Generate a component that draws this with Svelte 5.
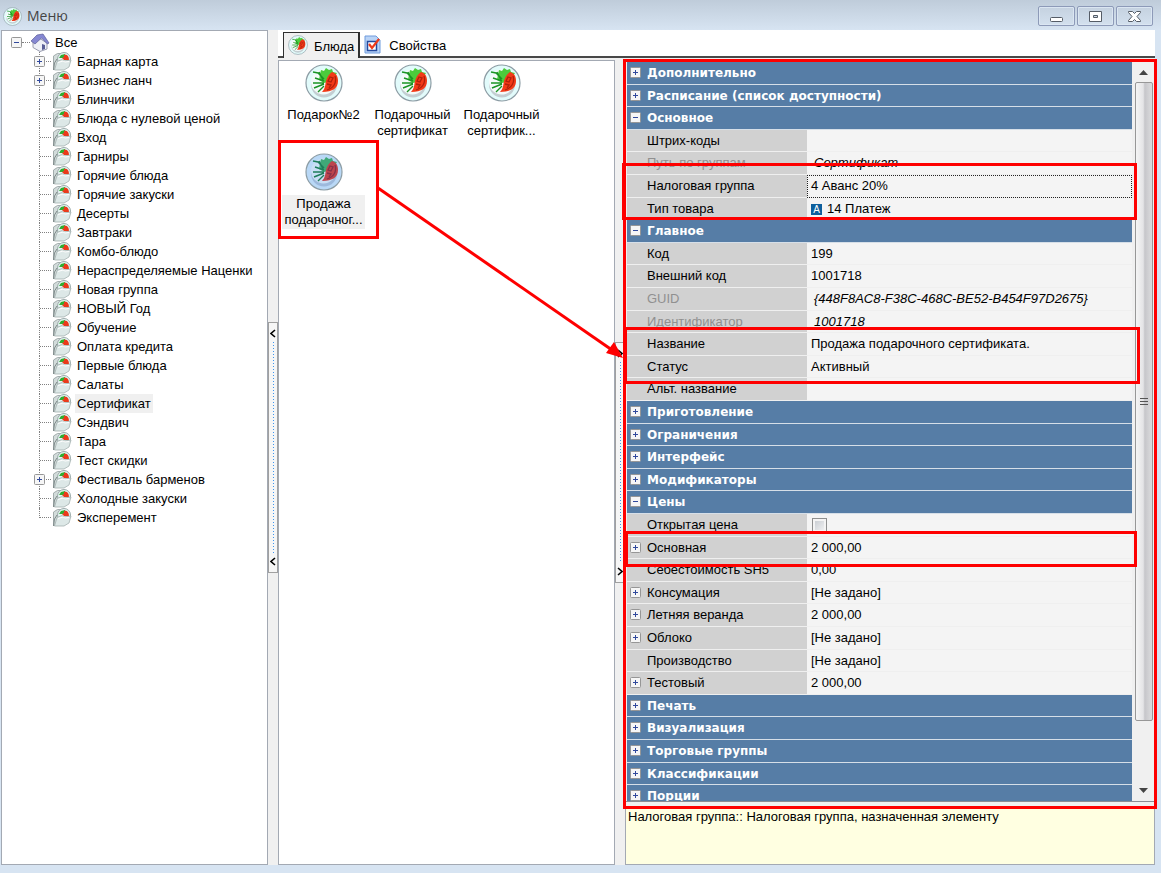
<script>
	const folders = [
		{ name: 'Барная карта', open: true },
		{ name: 'Бизнес ланч', open: true },
		{ name: 'Блинчики' },
		{ name: 'Блюда с нулевой ценой' },
		{ name: 'Вход' },
		{ name: 'Гарниры' },
		{ name: 'Горячие блюда' },
		{ name: 'Горячие закуски' },
		{ name: 'Десерты' },
		{ name: 'Завтраки' },
		{ name: 'Комбо-блюдо' },
		{ name: 'Нераспределяемые Наценки' },
		{ name: 'Новая группа' },
		{ name: 'НОВЫЙ Год' },
		{ name: 'Обучение' },
		{ name: 'Оплата кредита' },
		{ name: 'Первые блюда' },
		{ name: 'Салаты' },
		{ name: 'Сертификат' },
		{ name: 'Сэндвич' },
		{ name: 'Тара' },
		{ name: 'Тест скидки' },
		{ name: 'Фестиваль барменов', open: true },
		{ name: 'Холодные закуски' },
		{ name: 'Эксперемент' }
	];

	const dishes = [
		['Подарок№2'],
		['Подарочный', 'сертификат'],
		['Подарочный', 'сертифик...'],
		['Продажа', 'подарочног...']
	];

	const rows = [
		{ group: 'Дополнительно' },
		{ group: 'Расписание (список доступности)' },
		{ group: 'Основное', opened: true },
		{ name: 'Штрих-коды', value: '' },
		{ name: 'Путь по группам', value: 'Сертификат', readonly: true },
		{ name: 'Налоговая группа', value: '4 Аванс 20%', focused: true },
		{ name: 'Тип товара', value: '14 Платеж', badge: 'A' },
		{ group: 'Главное', opened: true },
		{ name: 'Код', value: '199' },
		{ name: 'Внешний код', value: '1001718' },
		{ name: 'GUID', value: '{448F8AC8-F38C-468C-BE52-B454F97D2675}', readonly: true },
		{ name: 'Идентификатор', value: '1001718', readonly: true },
		{ name: 'Название', value: 'Продажа подарочного сертификата.' },
		{ name: 'Статус', value: 'Активный' },
		{ name: 'Альт. название', value: '' },
		{ group: 'Приготовление' },
		{ group: 'Ограничения' },
		{ group: 'Интерфейс' },
		{ group: 'Модификаторы' },
		{ group: 'Цены', opened: true },
		{ name: 'Открытая цена', check: true },
		{ name: 'Основная', value: '2 000,00', plus: true },
		{ name: 'Себестоимость SH5', value: '0,00' },
		{ name: 'Консумация', value: '[Не задано]', plus: true },
		{ name: 'Летняя веранда', value: '2 000,00', plus: true },
		{ name: 'Облоко', value: '[Не задано]', plus: true },
		{ name: 'Производство', value: '[Не задано]' },
		{ name: 'Тестовый', value: '2 000,00', plus: true },
		{ group: 'Печать' },
		{ group: 'Визуализация' },
		{ group: 'Торговые группы' },
		{ group: 'Классификации' },
		{ group: 'Порции' }
	];

	let selectedFolder = 'Сертификат';
	let selectedDish = 3;
	let openPrice = false;
</script>

{#snippet plate(size, selected)}
	<svg class="plate" width={size} height={size} viewBox="0 0 38 38">
		<circle cx="19" cy="19" r="18" fill={selected ? '#b9d8f6' : '#e2fbfb'} stroke="#8d9da5" stroke-width="1.2" />
		<circle cx="19" cy="20.500" r="13" fill={selected ? '#9db9dc' : '#c3ced2'} />
		<circle cx="18.500" cy="18" r="12.500" fill={selected ? '#c8def4' : '#f4fafa'} />
		<path d="M15 10l1-4 3 1 2-3 3 2 3-1 1 3 4 1-2 3 2 3-4 2-9 2-5-3z" fill={selected ? '#3fa878' : '#4ccb3c'} />
		<path d="M8 8l5 1 6 6M14 8l4 8M10 14l9 3M8 19h11M9 24l10-4M13 28l6-6" stroke={selected ? '#1d7d5a' : '#1a9424'} stroke-width="1.400" fill="none" />
		<path d="M27 8c4 1 6 4 6 9c0 7-5 11-16 11c3-3 3-6 4-11c1-4 3-7 6-9z" fill={selected ? '#bd444e' : '#f23a18'} />
		<path d="M30 12c2 6-1 12-8 14M25 13l3 1-2 4-3-1zM22 20l4 1-2 3" stroke={selected ? '#85304a' : '#b0200c'} stroke-width="1.300" fill="none" />
	</svg>
{/snippet}

{#snippet folder()}
	<svg class="folder" width="20" height="19" viewBox="0 0 20 19">
		<path d="M1.500 4l4-2.500h4v14l-8 2z" fill="#d3dcdb" stroke="#a3adad" />
		<circle cx="12" cy="7" r="6.500" fill="#e4f3f1" stroke="#9cabaa" />
		<path d="M7 6l2-3 4-1 1 3-3 1z" fill="#2fae30" />
		<path d="M12 3c3-1 5 1 5 5h-5l-2-2 2-1z" fill="#ea3a1b" />
		<path d="M5 9.500l5-2 2 1.500 7-1-2 7-5 3H2.500z" fill="#dde8e7" stroke="#a4b1b0" stroke-width=".8" />
		<path d="M6 10.500l5-1.500 2 1 4-.500" stroke="#fff" fill="none" />
		<path d="M1.500 18l1-7 2.500-4" stroke="#7d8989" fill="none" />
	</svg>
{/snippet}

{#snippet box(minus)}
	<svg width="11" height="11" viewBox="0 0 11 11">
		<rect x=".5" y=".5" width="10" height="10" rx="1" fill="#f6f6f6" stroke="#969696" />
		<path d={minus ? 'M3 5.500h5' : 'M3 5.500h5M5.500 3v5'} stroke="#31499c" />
	</svg>
{/snippet}

{#snippet chevron(right)}
	<svg width="6" height="9" viewBox="0 0 6 9">
		<path d={right ? 'M1 1l4 3.500-4 3.500' : 'M5 1l-4 3.500 4 3.500'} fill="none" stroke="#000" stroke-width="1.600" />
	</svg>
{/snippet}

<div class="window">
	<header>
		{@render plate(19, false)}
		<h1>Меню</h1>
		<div class="controls">
			<button aria-label="Свернуть">
				<svg width="15" height="13" viewBox="0 0 15 13"><rect x="1.500" y="7.500" width="12" height="4" rx="1" fill="#fff" stroke="#555c66" /></svg>
			</button>
			<button aria-label="Развернуть">
				<svg width="15" height="13" viewBox="0 0 15 13"><path fill-rule="evenodd" d="M1.500 1.500h12v10h-12zM5.500 5.500h4v2h-4z" fill="#fff" stroke="#555c66" /></svg>
			</button>
			<button aria-label="Закрыть">
				<svg width="15" height="13" viewBox="0 0 15 13"><path d="M1.500 1.500h4l2 2 2-2h4v1l-3.500 4 3.500 4v1h-4l-2-2-2 2h-4v-1l3.500-4-3.500-4z" fill="#fff" stroke="#555c66" /></svg>
			</button>
		</div>
	</header>

	<main>
		<nav class="tree">
			<div class="root">
				<button class="toggle" aria-label="Свернуть Все">{@render box(true)}</button>
				<i class="dots"></i>
				<svg width="20" height="19" viewBox="0 0 20 19">
					<path d="M3 9l6-4 8 5v6l-7 2.500-7-4z" fill="#eef0f6" stroke="#9a9db0" />
					<path d="M1 8l6-6 6-1 6 9-1.500 1-6-6-6.500 6z" fill="#8587d2" stroke="#5b5d98" stroke-width=".7" />
					<path d="M12 17v-6l3 1v4z" fill="#5a5f96" />
				</svg>
				<span>Все</span>
			</div>
			<ul>
				{#each folders as item}
					<li>
						<span class="branch">
							{#if item.open}
								<button class="toggle" aria-label="Развернуть {item.name}">{@render box(false)}</button>
							{/if}
						</span>
						{@render folder()}
						<button class="label" class:selected={item.name === selectedFolder} on:click={() => (selectedFolder = item.name)}>
							{item.name}
						</button>
					</li>
				{/each}
			</ul>
		</nav>

		<div class="splitter">
			<div class="grip">{@render chevron(false)}<i></i>{@render chevron(false)}</div>
		</div>

		<section class="work">
			<div class="tabs" role="tablist">
				<button class="tab active" role="tab" aria-selected="true">
					{@render plate(20, false)}
					<span>Блюда</span>
				</button>
				<button class="tab" role="tab" aria-selected="false">
					<svg width="17" height="19" viewBox="0 0 17 19">
						<path d="M1 1h11l4 4v13H1z" fill="#b9d3f6" stroke="#6f9bdc" />
						<rect x="3.500" y="6.500" width="9" height="9" fill="#fff" stroke="#244a9e" stroke-width="1.500" />
						<path d="M5 9l3 4 7-9" stroke="#ee3a1a" stroke-width="2.200" fill="none" />
					</svg>
					<span>Свойства</span>
				</button>
			</div>

			<div class="panes">
				<div class="dishes">
					{#each dishes as lines, i}
						<button class="dish" class:selected={i === selectedDish} on:click={() => (selectedDish = i)}>
							{@render plate(38, i === selectedDish)}
							<span>
								{#each lines as line}
									{line}<br />
								{/each}
							</span>
						</button>
					{/each}
				</div>

				<div class="splitter">
					<div class="grip">{@render chevron(true)}<i></i>{@render chevron(true)}</div>
				</div>

				<div class="inspector">
					<div class="props">
						<div class="rows">
							<table>
								<colgroup>
									<col class="name-col" />
									<col />
								</colgroup>
								<tbody>
									{#each rows as row}
										{#if row.group}
											<tr class="group">
												<th colspan="2">
													<button class="toggle" aria-label="Раздел {row.group}">{@render box(row.opened)}</button>
													{row.group}
												</th>
											</tr>
										{:else}
											<tr class:readonly={row.readonly}>
												<td class="name">
													{#if row.plus}
														<button class="toggle" aria-label="Развернуть {row.name}">{@render box(false)}</button>
													{/if}
													{#if row.check}
														<label for="open-price">{row.name}</label>
													{:else}
														{row.name}
													{/if}
												</td>
												<td class="value" class:focused={row.focused}>
													{#if row.check}
														<input id="open-price" type="checkbox" bind:checked={openPrice} />
													{:else}
														{#if row.badge}<span class="badge">{row.badge}</span>{/if}{row.value}
													{/if}
												</td>
											</tr>
										{/if}
									{/each}
								</tbody>
							</table>
						</div>
						<div class="scrollbar">
							<svg width="9" height="5" viewBox="0 0 9 5"><path d="M0 5l4.500-5L9 5z" fill="#444" /></svg>
							<div class="thumb"><i></i><i></i><i></i></div>
							<svg width="9" height="5" viewBox="0 0 9 5"><path d="M0 0l4.500 5L9 0z" fill="#444" /></svg>
						</div>
					</div>
					<p class="hint">Налоговая группа:: Налоговая группа, назначенная элементу</p>
				</div>
			</div>
		</section>
	</main>

	<!-- red callouts drawn over the window -->
	<svg class="marks" width="1161" height="873" viewBox="0 0 1161 873">
		<g fill="none" stroke="#fe0000" stroke-width="3">
			<rect x="624.500" y="60.500" width="531" height="747" />
			<rect x="279.500" y="141.500" width="98" height="96" />
			<rect x="623.500" y="164.500" width="512" height="54" />
			<rect x="625.500" y="328.500" width="513" height="54" />
			<rect x="626.500" y="532.500" width="509" height="33" />
			<path d="M378 188L612 350" />
		</g>
		<path d="M623 358l-17-5 8-11z" fill="#fe0000" />
	</svg>
</div>

<style>
	:global(body) {
		margin: 0;
	}

	.window {
		position: relative;
		box-sizing: border-box;
		display: flex;
		flex-direction: column;
		height: 100vh;
		padding: 0 6px 8px 1px;
		overflow: hidden;
		background: #d7e4f2;
		color: #000;
		font: 13px/16px "Liberation Sans", Arial, sans-serif;
	}

	button {
		margin: 0;
		padding: 0;
		border: 0;
		background: none;
		color: inherit;
		font: inherit;
	}

	svg {
		display: block;
		flex: none;
	}

	/* title bar */
	header {
		display: flex;
		align-items: center;
		flex: none;
		height: 30px;
		margin: 0 -6px 0 -1px;
		padding: 2px 8px 0 3px;
		box-sizing: border-box;
		background: linear-gradient(#bfccda, #d7e4f2);
	}

	h1 {
		flex: 1;
		margin: 0 0 0 5px;
		color: #444;
		font: 14px/20px "Open Sans", "Noto Sans", sans-serif;
	}

	.controls {
		display: flex;
		gap: 2px;
	}

	.controls button {
		display: flex;
		align-items: center;
		justify-content: center;
		width: 37px;
		height: 20px;
		border: 1px solid #8d9ab8;
		border-radius: 2px;
		box-shadow: inset 0 0 0 1px #dbe6f2;
	}

	main {
		display: flex;
		flex: 1;
		min-height: 0;
		background: #f0f0f0;
	}

	/* folder tree */
	.tree {
		box-sizing: border-box;
		width: 267px;
		padding-top: 2px;
		border: 1px solid #a3a9b3;
		background: #fff;
	}

	.root,
	li {
		display: flex;
		align-items: center;
		height: 19px;
		white-space: nowrap;
	}

	.root {
		padding-left: 9px;
	}

	.root span {
		margin-left: 5px;
	}

	.dots {
		width: 8px;
		border-top: 1px dotted #808080;
	}

	ul {
		margin: 0 0 0 37px;
		padding: 0;
		list-style: none;
	}

	.branch {
		display: flex;
		align-items: center;
		align-self: stretch;
		width: 12px;
		border-left: 1px dotted #808080;
		background: repeating-linear-gradient(90deg, #808080 0 1px, #fff 1px 2px) 0 9px / 100% 1px no-repeat;
	}

	li:last-child .branch {
		align-self: flex-start;
		height: 10px;
	}

	.branch .toggle {
		margin-left: -6px;
	}

	.label {
		height: 19px;
		margin-left: 3px;
		padding: 0 2px;
	}

	.label.selected {
		background: #f0f0f0;
	}

	/* splitters */
	.splitter {
		display: flex;
		align-items: center;
		flex: none;
		width: 10px;
	}

	.grip {
		display: flex;
		flex-direction: column;
		align-items: center;
		gap: 4px;
		box-sizing: border-box;
		width: 10px;
		height: 30%;
		padding: 6px 0;
		border: 1px solid #a0a0a0;
		background: #f6f6f6;
	}

	.grip i {
		flex: 1;
		width: 1px;
		background: repeating-linear-gradient(#3e95ee 0 1px, transparent 1px 3px);
	}

	.work {
		display: flex;
		flex: 1;
		flex-direction: column;
		min-width: 0;
	}

	/* tabs */
	.tabs {
		display: flex;
		flex: none;
		height: 28px;
		margin-bottom: 2px;
		padding-left: 5px;
		box-sizing: border-box;
		border-bottom: 2px solid #484848;
		background: #fff;
	}

	.tab {
		display: flex;
		align-items: center;
		gap: 8px;
		height: 28px;
		padding-left: 4px;
	}

	.tab span {
		padding-top: 4px;
	}

	.tab.active {
		gap: 6px;
		box-sizing: border-box;
		height: 26px;
		margin: 2px 0 0;
		padding: 0 4px 2px;
		border: 1px solid #303030;
		border-width: 1px 2px 0 1px;
		background: #f0f0f0;
	}

	.panes {
		display: flex;
		flex: 1;
		min-height: 0;
	}

	.dishes {
		display: grid;
		grid-template-columns: repeat(auto-fill, 89px);
		grid-auto-rows: 89px;
		align-content: start;
		box-sizing: border-box;
		width: 337px;
		padding-top: 3px;
		border: 1px solid #a3a9b3;
		background: #fff;
	}

	.dish {
		display: flex;
		flex-direction: column;
		align-items: center;
		gap: 4px;
	}

	.dish span {
		padding: 1px 2px;
	}

	.dish.selected span {
		background: #f0f0f0;
	}

	/* property grid */
	.inspector {
		display: flex;
		flex: 1;
		flex-direction: column;
		gap: 5px;
		min-width: 0;
	}

	.props {
		display: flex;
		flex: 1;
		min-height: 0;
		padding: 2px 0 0 2px;
		border-bottom: 1px solid #8c8c94;
	}

	.rows {
		flex: 1;
		overflow: hidden;
		background: #f4f4f4;
	}

	table {
		width: 100%;
		table-layout: fixed;
		border-spacing: 0;
	}

	.name-col {
		width: 180px;
	}

	tr {
		height: 23px;
	}

	tr:nth-child(5n + 2),
	tr:nth-child(5n + 4) {
		height: 22px;
	}

	th,
	td {
		position: relative;
		padding: 0 0 0 20px;
		overflow: hidden;
		border-bottom: 1px solid #efefef;
		text-align: left;
		white-space: nowrap;
	}

	th {
		border-bottom-color: #d6dfe8;
		background: #567da6;
		color: #fff;
		font: bold 12px/16px "DejaVu Sans", sans-serif;
	}

	.name {
		background: #d1d1d1;
	}

	td.value {
		padding-left: 4px;
		background: #f4f4f4;
	}

	td .toggle,
	th .toggle {
		position: absolute;
		top: 5px;
		left: 3px;
	}

	.readonly .name {
		color: #909090;
	}

	.readonly .value {
		padding-left: 7px;
		font-style: italic;
	}

	.focused {
		outline: 1px dotted #222;
		outline-offset: -1px;
	}

	.badge {
		display: inline-block;
		width: 11px;
		margin-right: 5px;
		background: #0f5f9c;
		color: #fff;
		font-size: 10px;
		line-height: 11px;
		text-align: center;
	}

	input {
		display: block;
		appearance: none;
		box-sizing: border-box;
		width: 15px;
		height: 15px;
		margin: 0 0 0 1px;
		border: 1px solid #8e8f8f;
		background: linear-gradient(135deg, #c3c8ce, #f6f6f6);
		box-shadow: inset 0 0 0 2px #f4f4f4;
	}

	/* scroll bar */
	.scrollbar {
		display: flex;
		flex-direction: column;
		align-items: center;
		gap: 7px;
		width: 23px;
		padding: 8px 0;
		box-sizing: border-box;
		background: #f0f0f0;
	}

	.thumb {
		display: flex;
		flex: 1;
		flex-direction: column;
		align-items: center;
		justify-content: center;
		gap: 2px;
		width: 16px;
		margin-bottom: 60px;
		border: 1px solid #979797;
		border-radius: 2px;
		background: linear-gradient(90deg, #f5f5f5, #e4e4e6 45%, #c6c6ca 55%, #dcdcde);
	}

	.thumb i {
		width: 8px;
		height: 1px;
		background: #555;
	}

	.hint {
		flex: none;
		box-sizing: border-box;
		min-height: 58px;
		margin: 0;
		padding: 1px 2px;
		border: 1px solid #a3a9b3;
		background: #ffffe1;
	}

	.marks {
		position: absolute;
		top: 0;
		left: 0;
		pointer-events: none;
	}
</style>
